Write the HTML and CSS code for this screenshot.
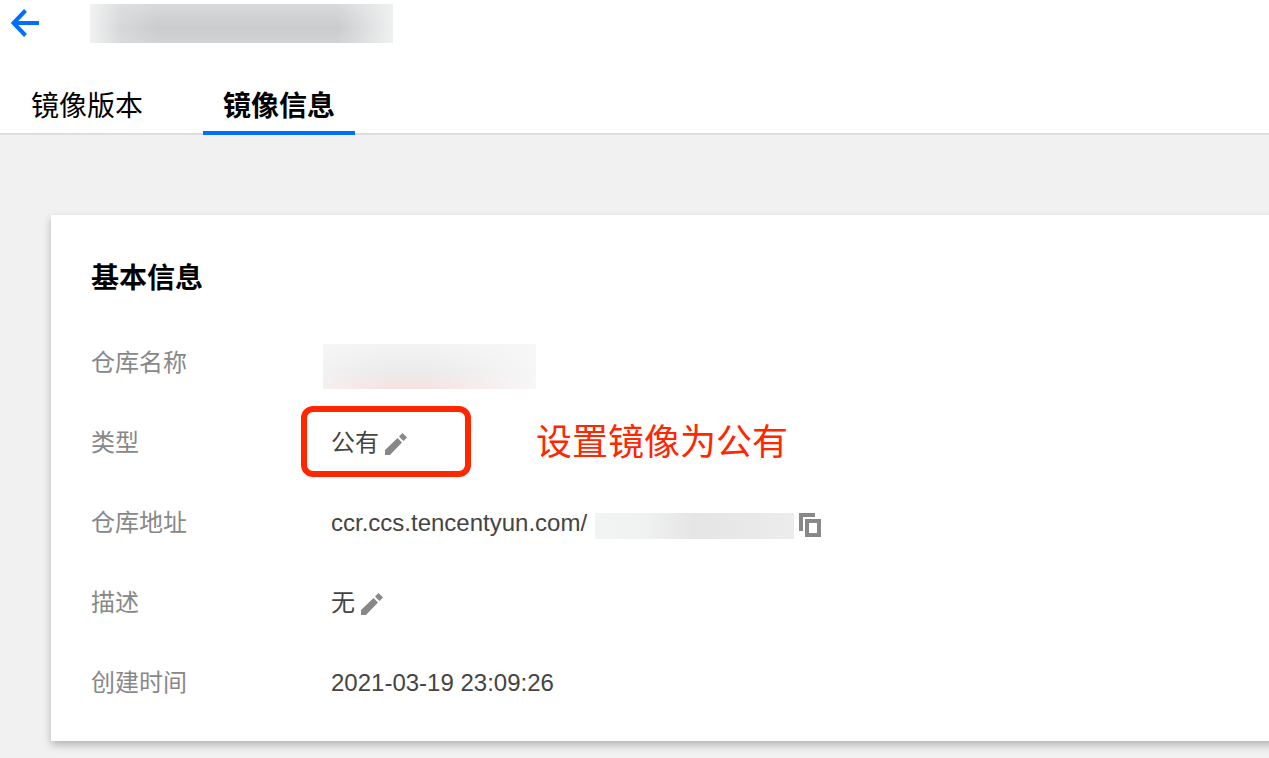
FILE: index.html
```html
<!DOCTYPE html>
<html lang="zh-CN">
<head>
<meta charset="utf-8">
<meta name="viewport" content="width=device-width, initial-scale=1">
<title>镜像信息</title>
<link rel="stylesheet" href="styles.css">
</head>
<body>
<header class="header">
  <div class="title-bar">
    <a class="back" href="#" aria-label="返回">
      <svg width="28" height="28" viewBox="0 0 28 28" fill="none" stroke="currentColor" stroke-width="4"><path d="M28 14H3M14.500 1.500L2.500 14l12 12.500"/></svg>
    </a>
    <span class="mask mask-title"></span>
  </div>
  <nav class="tabs">
    <a class="tab" href="#">镜像版本</a>
    <a class="tab tab-active" href="#" aria-current="page">镜像信息</a>
  </nav>
</header>
<main class="content">
  <section class="card">
    <h2 class="card-title">基本信息</h2>
    <dl class="info">
      <div class="row">
        <dt class="label">仓库名称</dt>
        <dd class="value"><span class="mask mask-name"></span></dd>
      </div>
      <div class="row">
        <dt class="label">类型</dt>
        <dd class="value">
          <span>公有</span>
          <button class="icon-button" type="button" aria-label="编辑类型">
            <svg width="22" height="22" viewBox="0 0 22 22" fill="currentColor"><path d="M0 17L12.500 5l4.500 4.500L5 22H0zM14 3.500L17.500 0 22 4.500 18.500 8z"/></svg>
          </button>
          <span class="highlight"></span>
          <span class="note">设置镜像为公有</span>
        </dd>
      </div>
      <div class="row">
        <dt class="label">仓库地址</dt>
        <dd class="value">
          <span class="address">ccr.ccs.tencentyun.com/</span><span class="mask mask-path"></span>
          <button class="icon-button icon-copy" type="button" aria-label="复制地址">
            <svg width="22" height="24" viewBox="0 0 22 24" fill="currentColor"><path d="M0 0H16V4H4V18H0z"/><path fill-rule="evenodd" d="M6 6H22V24H6zM10 10V20H18V10z"/></svg>
          </button>
        </dd>
      </div>
      <div class="row">
        <dt class="label">描述</dt>
        <dd class="value">
          <span>无</span>
          <button class="icon-button" type="button" aria-label="编辑描述">
            <svg width="22" height="22" viewBox="0 0 22 22" fill="currentColor"><path d="M0 17L12.500 5l4.500 4.500L5 22H0zM14 3.500L17.500 0 22 4.500 18.500 8z"/></svg>
          </button>
        </dd>
      </div>
      <div class="row">
        <dt class="label">创建时间</dt>
        <dd class="value">2021-03-19 23:09:26</dd>
      </div>
    </dl>
  </section>
</main>
</body>
</html>
```

FILE: styles.css
```css
* {
  box-sizing: border-box;
}

body {
  margin: 0;
  min-height: 100vh;
  background: #f1f1f1;
  color: #444;
  font-family: "Liberation Sans", "Noto Sans CJK SC", sans-serif;
  font-size: 24px;
  font-weight: 400;
  line-height: 40px;
}

.header {
  background: #fff;
  border-bottom: 2px solid #ddd;
}

.title-bar {
  display: flex;
  align-items: flex-start;
  gap: 51px;
  height: 75px;
  padding: 4px 11px 32px;
}

.back {
  display: flex;
  padding-top: 5px;
  color: #006eff;
}

.mask {
  flex: none;
}

.mask-title {
  width: 303px;
  height: 39px;
  background:
    linear-gradient(90deg, #f1f2f2, rgba(226, 227, 228, 0.5) 10%, transparent 22%, transparent 82%, #eff0f0),
    linear-gradient(#d9dadb, #cbccce 60%, #d2d3d4);
}

.tabs {
  display: flex;
  gap: 40px;
  padding-left: 11px;
}

.tab {
  height: 60px;
  margin-bottom: -2px;
  padding: 12px 20px 4px;
  border-bottom: 4px solid transparent;
  color: #000;
  font-size: 28px;
  text-decoration: none;
}

.tab-active {
  border-bottom-color: #006eff;
  font-weight: 700;
}

.content {
  padding: 80px 0 17px 51px;
  overflow: hidden;
}

.card {
  margin-right: -16px;
  padding: 44px 40px 18px;
  background: #fff;
  box-shadow: 0 4px 8px rgba(0, 0, 0, 0.25);
}

.card-title {
  margin: 0 0 24px;
  color: #000;
  font-size: 28px;
  font-weight: 700;
}

.info {
  margin: 0;
}

.row {
  display: flex;
  align-items: center;
  height: 80px;
}

.label {
  flex: none;
  width: 240px;
  color: #888;
}

.value {
  position: relative;
  display: flex;
  align-items: center;
  margin: 0;
}

.address {
  min-width: 264px;
}

.mask-name {
  width: 213px;
  height: 45px;
  margin-left: -8px;
  margin-top: 7px;
  background:
    linear-gradient(90deg, transparent 50%, #f7f7f7),
    linear-gradient(90deg, rgba(247, 247, 247, 0.6), transparent 30%),
    linear-gradient(#f4f4f4, #ebebeb 60%, #f7e2e1);
}

.mask-path {
  width: 199px;
  height: 26px;
  margin-top: 5px;
  background: linear-gradient(90deg, #f2f3f3, #f0f1f1 25%, #e5e5e5 50%, #ececec);
}

.icon-button {
  display: flex;
  margin-left: 6px;
  margin-top: 2px;
  padding: 0;
  border: 0;
  background: none;
  color: #888;
  cursor: pointer;
}

.icon-copy {
  margin-left: 5px;
  margin-top: 4px;
}

.highlight {
  position: absolute;
  top: -17px;
  left: -30px;
  width: 170px;
  height: 71px;
  border: 6px solid #ff2600;
  border-radius: 12px;
  pointer-events: none;
}

.note {
  position: absolute;
  left: 205px;
  color: #ff2600;
  font-size: 36px;
  white-space: nowrap;
}
```
